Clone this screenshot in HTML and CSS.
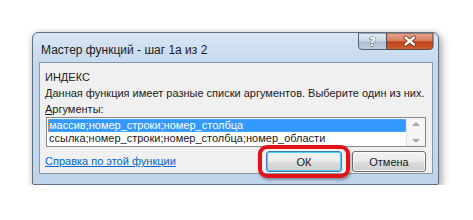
FILE: index.html
```html
<!DOCTYPE html>
<html lang="ru">
<head>
    <meta charset="UTF-8">
    <title>Мастер функций</title>
    <link rel="stylesheet" href="styles.css">
</head>
<body>
    <div class="dialog">
        <div class="titlebar">
            <span class="title">Мастер функций - шаг 1а из 2</span>
            <svg class="caption-buttons" width="76" height="18" viewBox="0 0 76 18">
                <defs>
                    <linearGradient id="helpFill" x1="0" y1="0" x2="0" y2="1">
                        <stop offset="0" stop-color="#e4ecf5"/>
                        <stop offset="0.5" stop-color="#cdd9e6"/>
                        <stop offset="0.52" stop-color="#adbccf"/>
                        <stop offset="1" stop-color="#c2cfdd"/>
                    </linearGradient>
                    <linearGradient id="closeFill" x1="0" y1="0" x2="0" y2="1">
                        <stop offset="0" stop-color="#e8a690"/>
                        <stop offset="0.45" stop-color="#d98062"/>
                        <stop offset="0.55" stop-color="#c0401a"/>
                        <stop offset="1" stop-color="#d3622f"/>
                    </linearGradient>
                </defs>
                <path d="M0.5 0 V13 Q0.5 16.5 4 16.5 H28.5 V0 Z" fill="url(#helpFill)" stroke="#526275"/>
                <path d="M28.5 0 V16.5 H71.5 Q75 16.5 75 13 V0 Z" fill="url(#closeFill)" stroke="#4f4a4a"/>
                <text x="14.5" y="13" text-anchor="middle" class="help-glyph">?</text>
                <path d="M47.5 4.5 L56 11.5 M56 4.5 L47.5 11.5" stroke="#6e2410" stroke-width="4" stroke-linecap="round"/>
                <path d="M47.5 4.5 L56 11.5 M56 4.5 L47.5 11.5" stroke="#ffffff" stroke-width="2.4" stroke-linecap="round"/>
            </svg>
        </div>
        <div class="panel">
            <div class="line">ИНДЕКС</div>
            <div class="line">Данная функция имеет разные списки аргументов. Выберите один из них.</div>
            <div class="line"><u>А</u>ргументы:</div>
            <div class="listbox">
                <div class="rows">
                    <div class="row selected">массив;номер_строки;номер_столбца</div>
                    <div class="row">ссылка;номер_строки;номер_столбца;номер_области</div>
                </div>
                <div class="scrollbar">
                    <span class="arrow up"></span>
                    <span class="arrow down"></span>
                </div>
            </div>
            <div class="footer">
                <a class="help-link" href="#">Справка по этой функции</a>
                <div class="buttons">
                    <button class="btn default">ОК</button>
                    <button class="btn">Отмена</button>
                </div>
            </div>
        </div>
    </div>
</body>
</html>
```

FILE: styles.css
```css
body {
    margin: 0;
    background: #fff;
    font-family: "Liberation Sans", Arial, sans-serif;
    font-size: 11px;
    color: #1a1a1a;
}

.dialog {
    margin: 32px 0 0 32px;
    width: 405px;
    height: 151px;
    border: 1px solid #5f6e80;
    border-radius: 6px 6px 2px 2px;
    background: linear-gradient(180deg, #d9e6f4 0%, #c6d9ee 20%, #c0d5ec 100%);
    box-shadow: 3px 4px 9px rgba(0, 0, 0, 0.3), 0 0 6px rgba(0, 0, 0, 0.14);
    display: flex;
    flex-direction: column;
}

.titlebar {
    height: 29px;
    display: flex;
    justify-content: space-between;
    align-items: flex-start;
}

.title {
    margin: 10px 0 0 8px;
    font-size: 12px;
    color: #1b1b1b;
}

.caption-buttons {
    flex: none;
    display: block;
    margin-right: 4px;
}

.help-glyph {
    font-family: "DejaVu Sans", sans-serif;
    font-weight: bold;
    font-size: 12px;
    fill: #ffffff;
    stroke: #46525f;
    stroke-width: 0.8px;
    paint-order: stroke;
}

.panel {
    margin: 0 5px 10px 6px;
    flex: 1;
    background: #f0f0f0;
    border: 1px solid #8896a8;
    padding: 6px 6px 0 5px;
}

.line {
    height: 16px;
    line-height: 16px;
    white-space: nowrap;
}

.listbox {
    margin-left: 1px;
    height: 28px;
    border: 1px solid #828790;
    background: #fff;
    display: flex;
}

.rows {
    flex: 1;
    padding: 1px 0 0 1px;
}

.row {
    height: 13px;
    line-height: 13px;
    padding-left: 1px;
    white-space: nowrap;
}

.selected {
    background: #3399ff;
    color: #fff;
    outline: 1px dotted #ff8a2a;
    outline-offset: -1px;
}

.scrollbar {
    width: 18px;
    background: #f4f4f4;
    border-left: 1px solid #e6e6e6;
    display: flex;
    flex-direction: column;
    justify-content: space-between;
    align-items: center;
    padding: 4px 0 3px;
}

.arrow {
    width: 0;
    height: 0;
    border-left: 4px solid transparent;
    border-right: 4px solid transparent;
}

.arrow.up {
    border-bottom: 4px solid #a8a8a8;
}

.arrow.down {
    border-top: 4px solid #a8a8a8;
}

.footer {
    margin-top: 4px;
    display: flex;
    justify-content: space-between;
    align-items: flex-start;
}

.help-link {
    margin-top: 4px;
    color: #0066cc;
    text-decoration: underline;
}

.buttons {
    display: flex;
    gap: 10px;
}

.btn {
    width: 74px;
    height: 21px;
    padding: 0;
    font-family: inherit;
    font-size: 11px;
    color: #1a1a1a;
    border: 1px solid #707070;
    border-radius: 3px;
    background: linear-gradient(180deg, #f2f2f2 0%, #ebebeb 50%, #dddddd 51%, #cfcfcf 100%);
    box-shadow: inset 0 0 0 1px rgba(255, 255, 255, 0.7);
}

.btn.default {
    position: relative;
    width: 76px;
    border-color: #3c7fb1;
    box-shadow: inset 0 0 0 1px #48d0fb;
}

.btn.default::after {
    content: "";
    position: absolute;
    top: -7px;
    left: -9px;
    right: -9px;
    bottom: -7px;
    border: 4px solid #e3121a;
    border-radius: 9px;
    box-shadow: 1px 2px 3px rgba(0, 0, 0, 0.35);
}
```
